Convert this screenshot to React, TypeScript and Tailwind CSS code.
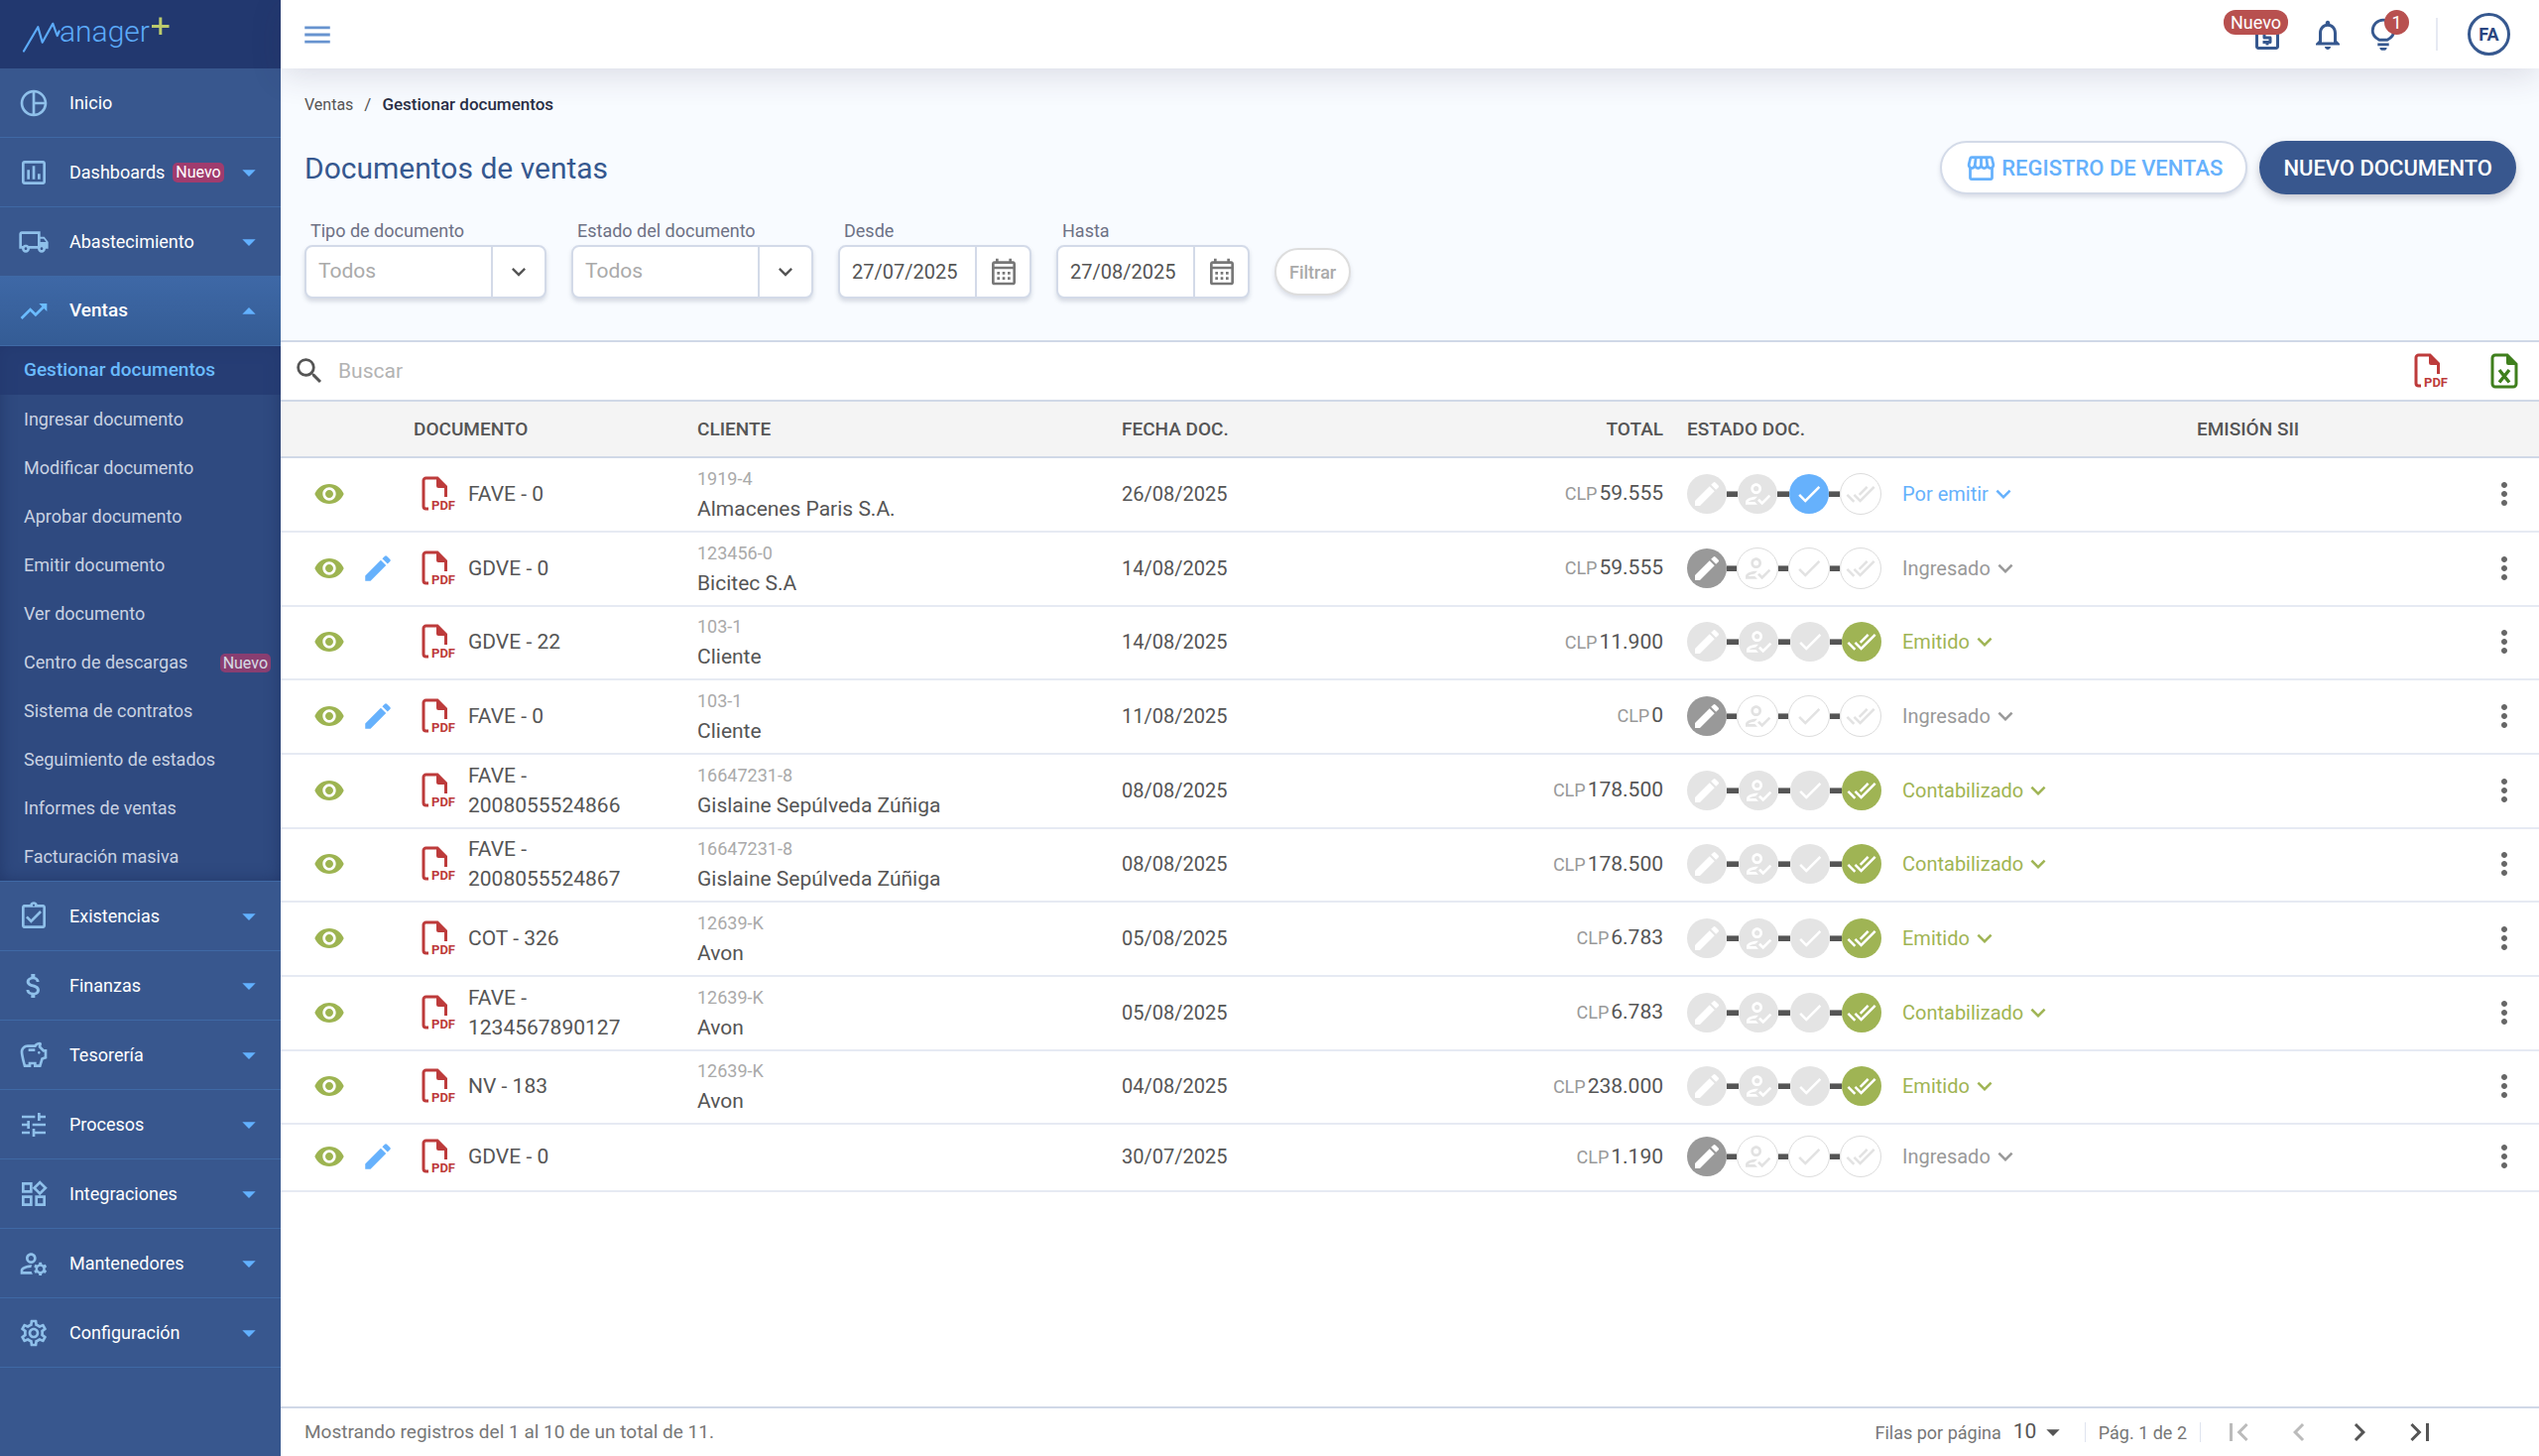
import React from "react";
import type { IconType } from "react-icons";
import {
  MdArrowDropDown,
  MdArrowDropUp,
  MdAttachMoney,
  MdCheck,
  MdChevronLeft,
  MdChevronRight,
  MdDoneAll,
  MdEdit,
  MdExpandMore,
  MdFirstPage,
  MdLastPage,
  MdMenu,
  MdMoreVert,
  MdNotificationsNone,
  MdOutlineAssignmentTurnedIn,
  MdOutlineCalendarMonth,
  MdOutlineHowToReg,
  MdOutlineInsertChart,
  MdOutlineLocalShipping,
  MdOutlineManageAccounts,
  MdOutlineRequestQuote,
  MdOutlineSavings,
  MdOutlineSettings,
  MdOutlineStorefront,
  MdOutlineWidgets,
  MdPieChartOutline,
  MdSearch,
  MdTrendingUp,
  MdTune,
  MdVisibility,
} from "react-icons/md";

type NavItem = { label: string; icon: IconType; badge?: string; leaf?: boolean; open?: boolean };

const topNav: NavItem[] = [
  { label: "Inicio", icon: MdPieChartOutline, leaf: true },
  { label: "Dashboards", icon: MdOutlineInsertChart, badge: "Nuevo" },
  { label: "Abastecimiento", icon: MdOutlineLocalShipping },
  { label: "Ventas", icon: MdTrendingUp, open: true },
];

const subNav: { label: string; badge?: string; active?: boolean }[] = [
  { label: "Gestionar documentos", active: true },
  { label: "Ingresar documento" },
  { label: "Modificar documento" },
  { label: "Aprobar documento" },
  { label: "Emitir documento" },
  { label: "Ver documento" },
  { label: "Centro de descargas", badge: "Nuevo" },
  { label: "Sistema de contratos" },
  { label: "Seguimiento de estados" },
  { label: "Informes de ventas" },
  { label: "Facturación masiva" },
];

const bottomNav: NavItem[] = [
  { label: "Existencias", icon: MdOutlineAssignmentTurnedIn },
  { label: "Finanzas", icon: MdAttachMoney },
  { label: "Tesorería", icon: MdOutlineSavings },
  { label: "Procesos", icon: MdTune },
  { label: "Integraciones", icon: MdOutlineWidgets },
  { label: "Mantenedores", icon: MdOutlineManageAccounts },
  { label: "Configuración", icon: MdOutlineSettings },
];

type Status = "Por emitir" | "Ingresado" | "Emitido" | "Contabilizado";
type Row = {
  doc: string;
  rut?: string;
  client?: string;
  date: string;
  total: string;
  status: Status;
};

const rows: Row[] = [
  { doc: "FAVE - 0", rut: "1919-4", client: "Almacenes Paris S.A.", date: "26/08/2025", total: "59.555", status: "Por emitir" },
  { doc: "GDVE - 0", rut: "123456-0", client: "Bicitec S.A", date: "14/08/2025", total: "59.555", status: "Ingresado" },
  { doc: "GDVE - 22", rut: "103-1", client: "Cliente", date: "14/08/2025", total: "11.900", status: "Emitido" },
  { doc: "FAVE - 0", rut: "103-1", client: "Cliente", date: "11/08/2025", total: "0", status: "Ingresado" },
  { doc: "FAVE - 2008055524866", rut: "16647231-8", client: "Gislaine Sepúlveda Zúñiga", date: "08/08/2025", total: "178.500", status: "Contabilizado" },
  { doc: "FAVE - 2008055524867", rut: "16647231-8", client: "Gislaine Sepúlveda Zúñiga", date: "08/08/2025", total: "178.500", status: "Contabilizado" },
  { doc: "COT - 326", rut: "12639-K", client: "Avon", date: "05/08/2025", total: "6.783", status: "Emitido" },
  { doc: "FAVE - 1234567890127", rut: "12639-K", client: "Avon", date: "05/08/2025", total: "6.783", status: "Contabilizado" },
  { doc: "NV - 183", rut: "12639-K", client: "Avon", date: "04/08/2025", total: "238.000", status: "Emitido" },
  { doc: "GDVE - 0", date: "30/07/2025", total: "1.190", status: "Ingresado" },
];

const statusStep: Record<Status, number> = { Ingresado: 0, "Por emitir": 2, Emitido: 3, Contabilizado: 3 };
const statusText: Record<Status, string> = {
  Ingresado: "text-[#999999]",
  "Por emitir": "text-[#66b1fc]",
  Emitido: "text-[#9fb454]",
  Contabilizado: "text-[#9fb454]",
};
const statusFill: Record<Status, string> = {
  Ingresado: "bg-[#999999]",
  "Por emitir": "bg-[#66b1fc]",
  Emitido: "bg-[#9fb454]",
  Contabilizado: "bg-[#9fb454]",
};

function Logo() {
  return (
    <svg viewBox="0 0 160 52" className="h-[52px] w-[160px] overflow-visible" role="img" aria-label="Manager+">
      <path
        d="M4 42.500 18.300 18.200 22.700 33.800 33.300 14.800 37.700 27 39.700 22.500"
        fill="none"
        stroke="#5cabfa"
        strokeWidth="2.200"
        strokeLinejoin="round"
        strokeLinecap="round"
      />
      <text x="40" y="33" fill="#5cabfa" fontSize="30" className="font-['Roboto',sans-serif] font-light">
        anager
      </text>
      <path d="M133 17.500h17.500M141.800 8.500v17.500" stroke="#bccb6c" strokeWidth="3" />
    </svg>
  );
}

function NewBadge() {
  return (
    <span className="rounded-[5px] bg-[#a03c6e] px-[3px] text-[16px] leading-5 text-white">Nuevo</span>
  );
}

function NavLink({ item }: { item: NavItem }) {
  const Icon = item.icon;
  const Caret = item.open ? MdArrowDropUp : MdArrowDropDown;
  return (
    <li>
      <button
        type="button"
        aria-expanded={item.leaf ? undefined : !!item.open}
        className={
          item.open
            ? "flex h-[70px] w-full items-center border-b border-[#3f69a5] bg-linear-to-b from-[#3e68a6] to-[#345c95] pr-4 pl-[18px] text-left text-[19px] font-medium text-white"
            : "flex h-[70px] w-full items-center border-b border-[#3f69a5] bg-[#38578e] pr-4 pl-[18px] text-left text-[18px] text-white"
        }
      >
        <Icon className={item.open ? "mr-5 size-8 shrink-0 text-[#6bbcff]" : "mr-5 size-8 shrink-0 text-[#8fc0ea]"} />
        <span className="mr-2">{item.label}</span>
        {item.badge && <NewBadge />}
        {!item.leaf && <Caret className="ml-auto size-8 text-[#62b1ff]" />}
      </button>
    </li>
  );
}

function Sidebar() {
  return (
    <aside className="w-[283px] shrink-0 bg-[#38578e]">
      <div className="flex h-[69px] items-center bg-[#22386f] pl-5">
        <Logo />
      </div>
      <nav aria-label="Principal">
        <ul>
          {topNav.map((n) => (
            <NavLink key={n.label} item={n} />
          ))}
        </ul>
        <ul className="bg-[#2f4a80] shadow-[inset_0_0_16px_rgba(20,35,80,0.45)]">
          {subNav.map((s) => (
            <li key={s.label}>
              <a
                href="#"
                className={
                  s.active
                    ? "flex h-[49px] items-center justify-between bg-[#22386f]/70 pr-[10px] pl-6 text-[19px] font-medium text-[#6bbcff]"
                    : "flex h-[49px] items-center justify-between pr-[10px] pl-6 text-[18px] text-[#c9d2e2]"
                }
              >
                {s.label}
                {s.badge && (
                  <span className="opacity-80">
                    <NewBadge />
                  </span>
                )}
              </a>
            </li>
          ))}
        </ul>
        <ul className="border-t border-[#3f69a5]">
          {bottomNav.map((n) => (
            <NavLink key={n.label} item={n} />
          ))}
        </ul>
      </nav>
    </aside>
  );
}

function BulbIcon() {
  return (
    <svg viewBox="0 0 24 24" className="size-9" fill="none" stroke="currentColor" aria-hidden="true">
      <path d="M9.300 15.500C7 14.300 4.800 12.300 4.800 9.300a7.200 7.200 0 0 1 14.400 0c0 3-2.200 5-4.500 6.200z" strokeWidth="1.900" />
      <path d="M8.200 18.600h7.600" strokeWidth="1.900" />
      <path d="M9.600 20.600h4.800a2.400 1.900 0 0 1-4.800 0z" fill="currentColor" stroke="none" />
    </svg>
  );
}

function TopBar() {
  return (
    <header className="relative z-10 flex h-[69px] items-center justify-between bg-white pr-[29px] pl-5 text-[#36588f] shadow-[0_8px_32px_rgba(50,40,80,0.14)]">
      <button type="button" aria-label="Menú" className="text-[#6793cf]">
        <MdMenu className="size-[34px]" />
      </button>
      <div className="flex items-center">
        <button type="button" aria-label="Cotizaciones, nuevo" className="relative mr-[25px]">
          <MdOutlineRequestQuote className="size-9" />
          <span className="absolute -top-[7px] right-[-3px] rounded-[12px] bg-[#b8504f] px-[7px] text-[18px] leading-[25px] text-white">
            Nuevo
          </span>
        </button>
        <button type="button" aria-label="Notificaciones" className="mr-5">
          <MdNotificationsNone className="size-9" />
        </button>
        <button type="button" aria-label="Ideas, 1" className="relative mr-[35px]">
          <BulbIcon />
          <span className="absolute -top-[7px] -right-2 size-[25px] rounded-full bg-[#b8504f] text-[18px] leading-[25px] text-white">
            1
          </span>
        </button>
        <span className="mr-[30px] h-[33px] w-0.5 bg-[#e6e9f2]" />
        <button
          type="button"
          aria-label="Cuenta FA"
          className="size-[43px] rounded-full border-3 border-[#36588f] text-[18px] leading-none font-bold text-[#2b4680]"
        >
          FA
        </button>
      </div>
    </header>
  );
}

function SelectField({ id, label }: { id: string; label: string }) {
  return (
    <div>
      <label htmlFor={id} className="block h-[26px] pl-[6px] text-[18px] leading-6 text-[#6d7185]">
        {label}
      </label>
      <div className="relative">
        <select
          id={id}
          className="h-[54px] w-[244px] appearance-none rounded-lg border-2 border-[#d3dae8] bg-white pl-3 text-[21px] text-[#aaaaaa] shadow-[0_3px_4px_rgba(60,70,100,0.18)]"
        >
          <option>Todos</option>
        </select>
        <span className="pointer-events-none absolute inset-y-0.5 right-0.5 flex w-[54px] items-center justify-center border-l-2 border-[#d3dae8] text-[#555555]">
          <MdExpandMore className="size-7" />
        </span>
      </div>
    </div>
  );
}

function DateField({ id, label, value }: { id: string; label: string; value: string }) {
  return (
    <div>
      <label htmlFor={id} className="block h-[26px] pl-[6px] text-[18px] leading-6 text-[#6d7185]">
        {label}
      </label>
      <div className="flex h-[54px] w-[195px] rounded-lg border-2 border-[#d3dae8] bg-white shadow-[0_3px_4px_rgba(60,70,100,0.18)]">
        <input id={id} defaultValue={value} className="w-0 grow rounded-l-lg pl-3 text-[20px] text-[#555555]" />
        <button
          type="button"
          aria-label={"Abrir calendario " + label}
          className="flex w-[55px] items-center justify-center border-l-2 border-[#d3dae8] text-[#777777]"
        >
          <MdOutlineCalendarMonth className="size-8" />
        </button>
      </div>
    </div>
  );
}

function PdfIcon() {
  return (
    <svg viewBox="0 0 36 40" className="h-10 w-9 text-[#bd3b3b]" fill="none" aria-hidden="true">
      <path d="M8 35H5.600A2.600 2.600 0 0 1 3 32.400V6.600A2.600 2.600 0 0 1 5.600 4H17l8.500 8.500V23" stroke="currentColor" strokeWidth="3" />
      <path d="M16 3.500 27 14h-9a2 2 0 0 1-2-2z" fill="currentColor" />
      <text x="11" y="36" fill="currentColor" fontSize="13" className="font-['Roboto',sans-serif] font-bold">
        PDF
      </text>
    </svg>
  );
}

function ExcelIcon() {
  return (
    <svg viewBox="0 0 28 36" className="h-9 w-7 text-[#3f7f1d]" fill="none" aria-hidden="true">
      <path d="M17 2H5a3 3 0 0 0-3 3v26a3 3 0 0 0 3 3h18a3 3 0 0 0 3-3V11z" stroke="currentColor" strokeWidth="3" />
      <path d="M16 1.500 26.500 12H18a2 2 0 0 1-2-2z" fill="currentColor" />
      <path d="m9 17 10 12.500M19 17 9 29.500" stroke="currentColor" strokeWidth="3.400" />
    </svg>
  );
}

const steps = [
  { icon: MdEdit, size: "size-8" },
  { icon: MdOutlineHowToReg, size: "size-8" },
  { icon: MdCheck, size: "size-[30px]" },
  { icon: MdDoneAll, size: "size-[30px]" },
];

function Stepper({ status }: { status: Status }) {
  const current = statusStep[status];
  return (
    <div className="flex w-[196px] items-center">
      {steps.map(({ icon: Icon, size }, i) => (
        <React.Fragment key={i}>
          {i > 0 && <span className="h-[6px] flex-1 border-t border-[#999999] bg-[#555555]" />}
          <span
            className={
              i === current
                ? `flex size-10 items-center justify-center rounded-full text-white ${statusFill[status]}`
                : i < current
                  ? "flex size-10 items-center justify-center rounded-full bg-[#e4e4e4] text-white"
                  : "flex size-[42px] items-center justify-center rounded-full border-[1px] border-[#dcdcdc] text-[#e2e2e2]"
            }
          >
            <Icon className={size} />
          </span>
        </React.Fragment>
      ))}
    </div>
  );
}

function DocumentsTable() {
  return (
    <table className="w-full table-fixed border-collapse text-[21px] leading-[30px] text-[#555555]">
      <colgroup>
        <col className="w-[122px]" />
        <col className="w-[286px]" />
        <col />
        <col className="w-[300px]" />
        <col className="w-[270px]" />
        <col className="w-[514px]" />
        <col className="w-[287px]" />
        <col className="w-[70px]" />
      </colgroup>
      <thead>
        <tr className="h-14 border-b-2 border-[#d0d8e7] bg-[#f4f4f4] text-left text-[19px] [&>th]:px-3 [&>th]:font-medium">
          <th aria-label="Acciones" />
          <th>DOCUMENTO</th>
          <th>CLIENTE</th>
          <th>FECHA DOC.</th>
          <th className="text-right">TOTAL</th>
          <th>ESTADO DOC.</th>
          <th>EMISIÓN SII</th>
          <th aria-label="Opciones" />
        </tr>
      </thead>
      <tbody>
        {rows.map((r, i) => (
          <tr
            key={i}
            className="h-[75px] border-b-2 border-[#e6eaf3] last:h-[68px] nth-[3n]:h-[74px] [&>td]:px-3 [&>td]:pt-[5px] [&>td]:pb-[7px]"
          >
            <td>
              <div className="flex items-center gap-4 pl-[21px]">
                <button type="button" aria-label="Ver" className="text-[#9db451]">
                  <MdVisibility className="size-8" />
                </button>
                {r.status === "Ingresado" && (
                  <button type="button" aria-label="Editar" className="text-[#66b1fc]">
                    <MdEdit className="size-[34px]" />
                  </button>
                )}
              </div>
            </td>
            <td>
              <div className="flex items-center gap-3 pl-[7px]">
                <button type="button" aria-label="PDF" className="shrink-0">
                  <PdfIcon />
                </button>
                <span>{r.doc}</span>
              </div>
            </td>
            <td>
              {r.client && (
                <>
                  <div className="text-[18px] text-[#aaaaaa]">{r.rut}</div>
                  <div>{r.client}</div>
                </>
              )}
            </td>
            <td className="text-[20px]">{r.date}</td>
            <td className="text-right">
              <span className="mr-0.5 text-[18px] text-[#999999]">CLP</span>
              {r.total}
            </td>
            <td>
              <div className="flex items-center">
                <Stepper status={r.status} />
                <button type="button" className={`ml-[21px] flex items-center text-[20px] ${statusText[r.status]}`}>
                  {r.status}
                  <MdExpandMore className="size-[30px]" />
                </button>
              </div>
            </td>
            <td />
            <td>
              <button type="button" aria-label="Más opciones" className="mx-auto block text-[#666666]">
                <MdMoreVert className="size-9" />
              </button>
            </td>
          </tr>
        ))}
      </tbody>
    </table>
  );
}

function Footer() {
  return (
    <footer className="mt-auto flex h-[50px] items-center border-t-2 border-[#d0d8e7] pr-[90px] pl-6 text-[19px] text-[#777777]">
      <p>Mostrando registros del 1 al 10 de un total de 11.</p>
      <div className="ml-auto flex items-center">
        <label htmlFor="page-size" className="mr-3 text-[18px]">
          Filas por página
        </label>
        <div className="relative mr-4">
          <select id="page-size" className="w-14 appearance-none text-[21px] text-[#555555]">
            <option>10</option>
          </select>
          <MdArrowDropDown className="pointer-events-none absolute top-0 right-0 size-8 text-[#555555]" />
        </div>
        <span className="h-5 w-px bg-[#dfe4ef]" />
        <span className="mx-[13px] text-[18px]">Pág. 1 de 2</span>
        <span className="h-5 w-px bg-[#dfe4ef]" />
        <div className="ml-[7px] flex text-[#555555] [&>button]:flex [&>button]:w-[61px] [&>button]:justify-center">
          <button type="button" aria-label="Primera página" disabled className="text-[#bbbbbb]">
            <MdFirstPage className="size-9" />
          </button>
          <button type="button" aria-label="Página anterior" disabled className="text-[#bbbbbb]">
            <MdChevronLeft className="size-9" />
          </button>
          <button type="button" aria-label="Página siguiente">
            <MdChevronRight className="size-9" />
          </button>
          <button type="button" aria-label="Última página">
            <MdLastPage className="size-9" />
          </button>
        </div>
      </div>
    </footer>
  );
}

export default function App() {
  return (
    <div className="flex min-h-screen bg-white font-['Roboto',sans-serif] antialiased">
      <Sidebar />
      <div className="flex min-w-0 flex-1 flex-col">
        <TopBar />
        <main className="flex flex-1 flex-col">
          <section className="border-b-2 border-[#d0d8e7] bg-[#f8fbff] pt-[25px] pr-[23px] pb-[42px] pl-6">
            <nav aria-label="Ruta" className="flex h-6 items-center text-[17px] text-[#555555]">
              <a href="#" className="text-[16px]">Ventas</a>
              <span className="mx-[11px]">/</span>
              <span className="font-medium text-[#2a2f45]">Gestionar documentos</span>
            </nav>
            <div className="mt-6 flex h-[54px] items-center gap-3">
              <h1 className="mr-auto text-[30px] text-[#36588f]">Documentos de ventas</h1>
              <button
                type="button"
                className="flex h-[54px] items-center gap-1 rounded-full border-2 border-[#d3dae8] bg-white px-[23px] text-[22px] font-medium text-[#66b1fc] shadow-[0_3px_4px_rgba(60,70,100,0.15)]"
              >
                <MdOutlineStorefront className="size-[33px]" />
                REGISTRO DE VENTAS
              </button>
              <button
                type="button"
                className="h-[54px] rounded-full bg-[#38578e] px-6 text-[22px] font-medium text-white shadow-[0_4px_8px_rgba(40,40,60,0.25)]"
              >
                NUEVO DOCUMENTO
              </button>
            </div>
            <form className="mt-[25px] flex items-end gap-[25px]" onSubmit={(e) => e.preventDefault()}>
              <SelectField id="doc-type" label="Tipo de documento" />
              <SelectField id="doc-status" label="Estado del documento" />
              <DateField id="from" label="Desde" value="27/07/2025" />
              <DateField id="to" label="Hasta" value="27/08/2025" />
              <button
                type="submit"
                className="mb-[3px] h-12 rounded-full border-2 border-[#dddddd] bg-white px-[13px] text-[18px] font-medium text-[#aaaaaa] shadow-[0_3px_4px_rgba(60,70,100,0.15)]"
              >
                Filtrar
              </button>
            </form>
          </section>
          <div className="flex h-[60px] items-center border-b-2 border-[#d0d8e7] pr-[21px] pl-3">
            <label htmlFor="search" aria-label="Buscar" className="text-[#555555]">
              <MdSearch className="size-[34px]" />
            </label>
            <input id="search" placeholder="Buscar" className="ml-3 h-10 flex-1 text-[21px] placeholder:text-[#b3b3b3]" />
            <button type="button" aria-label="Exportar a PDF" className="mr-[42px]">
              <PdfIcon />
            </button>
            <button type="button" aria-label="Exportar a Excel">
              <ExcelIcon />
            </button>
          </div>
          <DocumentsTable />
          <Footer />
        </main>
      </div>
    </div>
  );
}
